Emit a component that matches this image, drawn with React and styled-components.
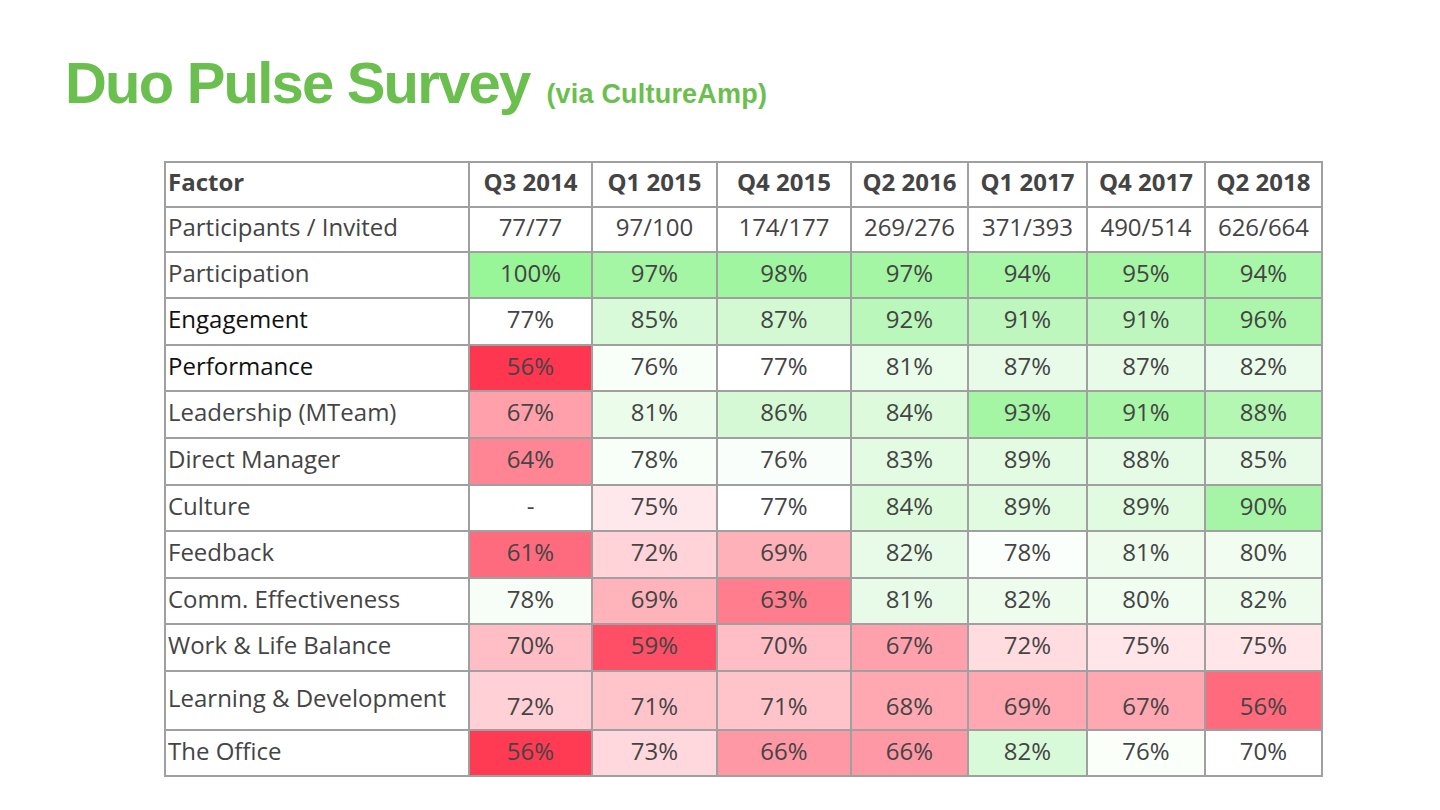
import React from "react";
import styled, { createGlobalStyle } from "styled-components";

const GlobalStyle = createGlobalStyle`
  html, body {
    margin: 0;
    padding: 0;
    background: #ffffff;
  }
  body {
    width: 1440px;
    height: 810px;
    overflow: hidden;
  }
`;

const Slide = styled.div`
  width: 1440px;
  height: 810px;
  box-sizing: border-box;
  padding: 54px 0 0 65px;
  display: flex;
  flex-direction: column;
`;

const Heading = styled.h1`
  margin: 0;
  display: flex;
  align-items: baseline;
  gap: 17px;
  color: #6bbf4e;
  font-family: "Liberation Sans", Arial, sans-serif;
  font-weight: bold;
  line-height: 1;
`;

const Title = styled.span`
  font-size: 58px;
  letter-spacing: -1.8px;
`;

const Subtitle = styled.span`
  font-size: 27px;
  letter-spacing: 0.2px;
`;

const Table = styled.table`
  margin: 49px 0 0 99px;
  border-collapse: collapse;
  table-layout: fixed;
  width: 1157px;
  font-family: "Open Sans", "DejaVu Sans", sans-serif;
  font-size: 24px;
  color: #444;
`;

const Row = styled.tr`
  height: ${(p) => p.h}px;
`;

const Cell = styled.td`
  border: 2px solid #a0a0a0;
  padding: ${(p) => (p.low ? "16px 0 6px" : "0 0 6px")};
  text-align: center;
  vertical-align: middle;
  background: ${(p) => p.bg || "#ffffff"};
  white-space: nowrap;
`;

const Label = styled.td`
  border: 2px solid #a0a0a0;
  padding: 0 0 6px 2px;
  text-align: left;
  vertical-align: middle;
  color: ${(p) => (p.dark ? "#111" : "#444")};
  white-space: nowrap;
`;

const Head = styled.th`
  border: 2px solid #a0a0a0;
  padding: 0 0 6px ${(p) => (p.first ? "2px" : "0")};
  text-align: ${(p) => (p.first ? "left" : "center")};
  font-weight: 700;
  color: #444;
  white-space: nowrap;
`;

const widths = [304, 123, 125, 134, 117, 119, 118, 117];
const quarters = ["Q3 2014", "Q1 2015", "Q4 2015", "Q2 2016", "Q1 2017", "Q4 2017", "Q2 2018"];

// [label, height, dark label, cells: [text, bg], value sits low]
const rows = [
  ["Participants / Invited", 45, false, [
    ["77/77"], ["97/100"], ["174/177"], ["269/276"], ["371/393"], ["490/514"], ["626/664"],
  ]],
  ["Participation", 46, false, [
    ["100%", "#98f598"], ["97%", "#a4f6a4"], ["98%", "#a0f5a0"], ["97%", "#a4f6a4"],
    ["94%", "#a8f6a8"], ["95%", "#a6f6a6"], ["94%", "#a8f6a8"],
  ]],
  ["Engagement", 47, true, [
    ["77%", "#ffffff"], ["85%", "#d8fad8"], ["87%", "#d2f9d2"], ["92%", "#baf7ba"],
    ["91%", "#bef7be"], ["91%", "#bef7be"], ["96%", "#abf6ab"],
  ]],
  ["Performance", 46, true, [
    ["56%", "#ff3650"], ["76%", "#f8fef8"], ["77%", "#ffffff"], ["81%", "#eafcea"],
    ["87%", "#e8fbe8"], ["87%", "#e8fbe8"], ["82%", "#ecfcec"],
  ]],
  ["Leadership (MTeam)", 47, false, [
    ["67%", "#ffa0ab"], ["81%", "#ebfceb"], ["86%", "#d4f9d4"], ["84%", "#ddfadd"],
    ["93%", "#a4f5a4"], ["91%", "#a9f6a9"], ["88%", "#b3f7b3"],
  ]],
  ["Direct Manager", 47, false, [
    ["64%", "#ff8494"], ["78%", "#f8fef8"], ["76%", "#fafefa"], ["83%", "#e2fbe2"],
    ["89%", "#e3fbe3"], ["88%", "#e6fbe6"], ["85%", "#e8fbe8"],
  ]],
  ["Culture", 46, false, [
    ["-", "#ffffff"], ["75%", "#ffe8eb"], ["77%", "#ffffff"], ["84%", "#ddfadd"],
    ["89%", "#e0fbe0"], ["89%", "#e0fbe0"], ["90%", "#a6f5a6"],
  ]],
  ["Feedback", 47, false, [
    ["61%", "#ff6b7e"], ["72%", "#ffd3d8"], ["69%", "#ffb1b9"], ["82%", "#e8fbe8"],
    ["78%", "#fbfffb"], ["81%", "#eefcee"], ["80%", "#f0fdf0"],
  ]],
  ["Comm. Effectiveness", 46, false, [
    ["78%", "#f7fef7"], ["69%", "#ffb3bb"], ["63%", "#ff7d8d"], ["81%", "#e8fbe8"],
    ["82%", "#eefcee"], ["80%", "#f0fdf0"], ["82%", "#eefcee"],
  ]],
  ["Work & Life Balance", 47, false, [
    ["70%", "#ffbec5"], ["59%", "#ff4f66"], ["70%", "#ffbec5"], ["67%", "#ffa1ac"],
    ["72%", "#ffdce0"], ["75%", "#ffe6e9"], ["75%", "#ffe6e9"],
  ]],
  ["Learning & Development", 59, false, [
    ["72%", "#ffd0d6"], ["71%", "#ffc4ca"], ["71%", "#ffc4ca"], ["68%", "#ffa8b2"],
    ["69%", "#ffa8b2"], ["67%", "#ffa8b2"], ["56%", "#ff6a7c"],
  ], true],
  ["The Office", 46, false, [
    ["56%", "#ff3a53"], ["73%", "#ffd8dd"], ["66%", "#ff98a5"], ["66%", "#ff98a5"],
    ["82%", "#d9fad9"], ["76%", "#fafffa"], ["70%", "#ffffff"],
  ]],
];

export default function App() {
  return (
    <>
      <GlobalStyle />
      <Slide>
        <Heading>
          <Title>Duo Pulse Survey</Title>
          <Subtitle>(via CultureAmp)</Subtitle>
        </Heading>
        <Table>
          <colgroup>
            {widths.map((w, i) => (
              <col key={i} style={{ width: w }} />
            ))}
          </colgroup>
          <thead>
            <Row h={45}>
              <Head first>Factor</Head>
              {quarters.map((q) => (
                <Head key={q}>{q}</Head>
              ))}
            </Row>
          </thead>
          <tbody>
            {rows.map(([label, h, dark, cells, low]) => (
              <Row key={label} h={h}>
                <Label dark={dark}>{label}</Label>
                {cells.map(([text, bg], i) => (
                  <Cell key={i} bg={bg} low={low}>
                    {text}
                  </Cell>
                ))}
              </Row>
            ))}
          </tbody>
        </Table>
      </Slide>
    </>
  );
}
